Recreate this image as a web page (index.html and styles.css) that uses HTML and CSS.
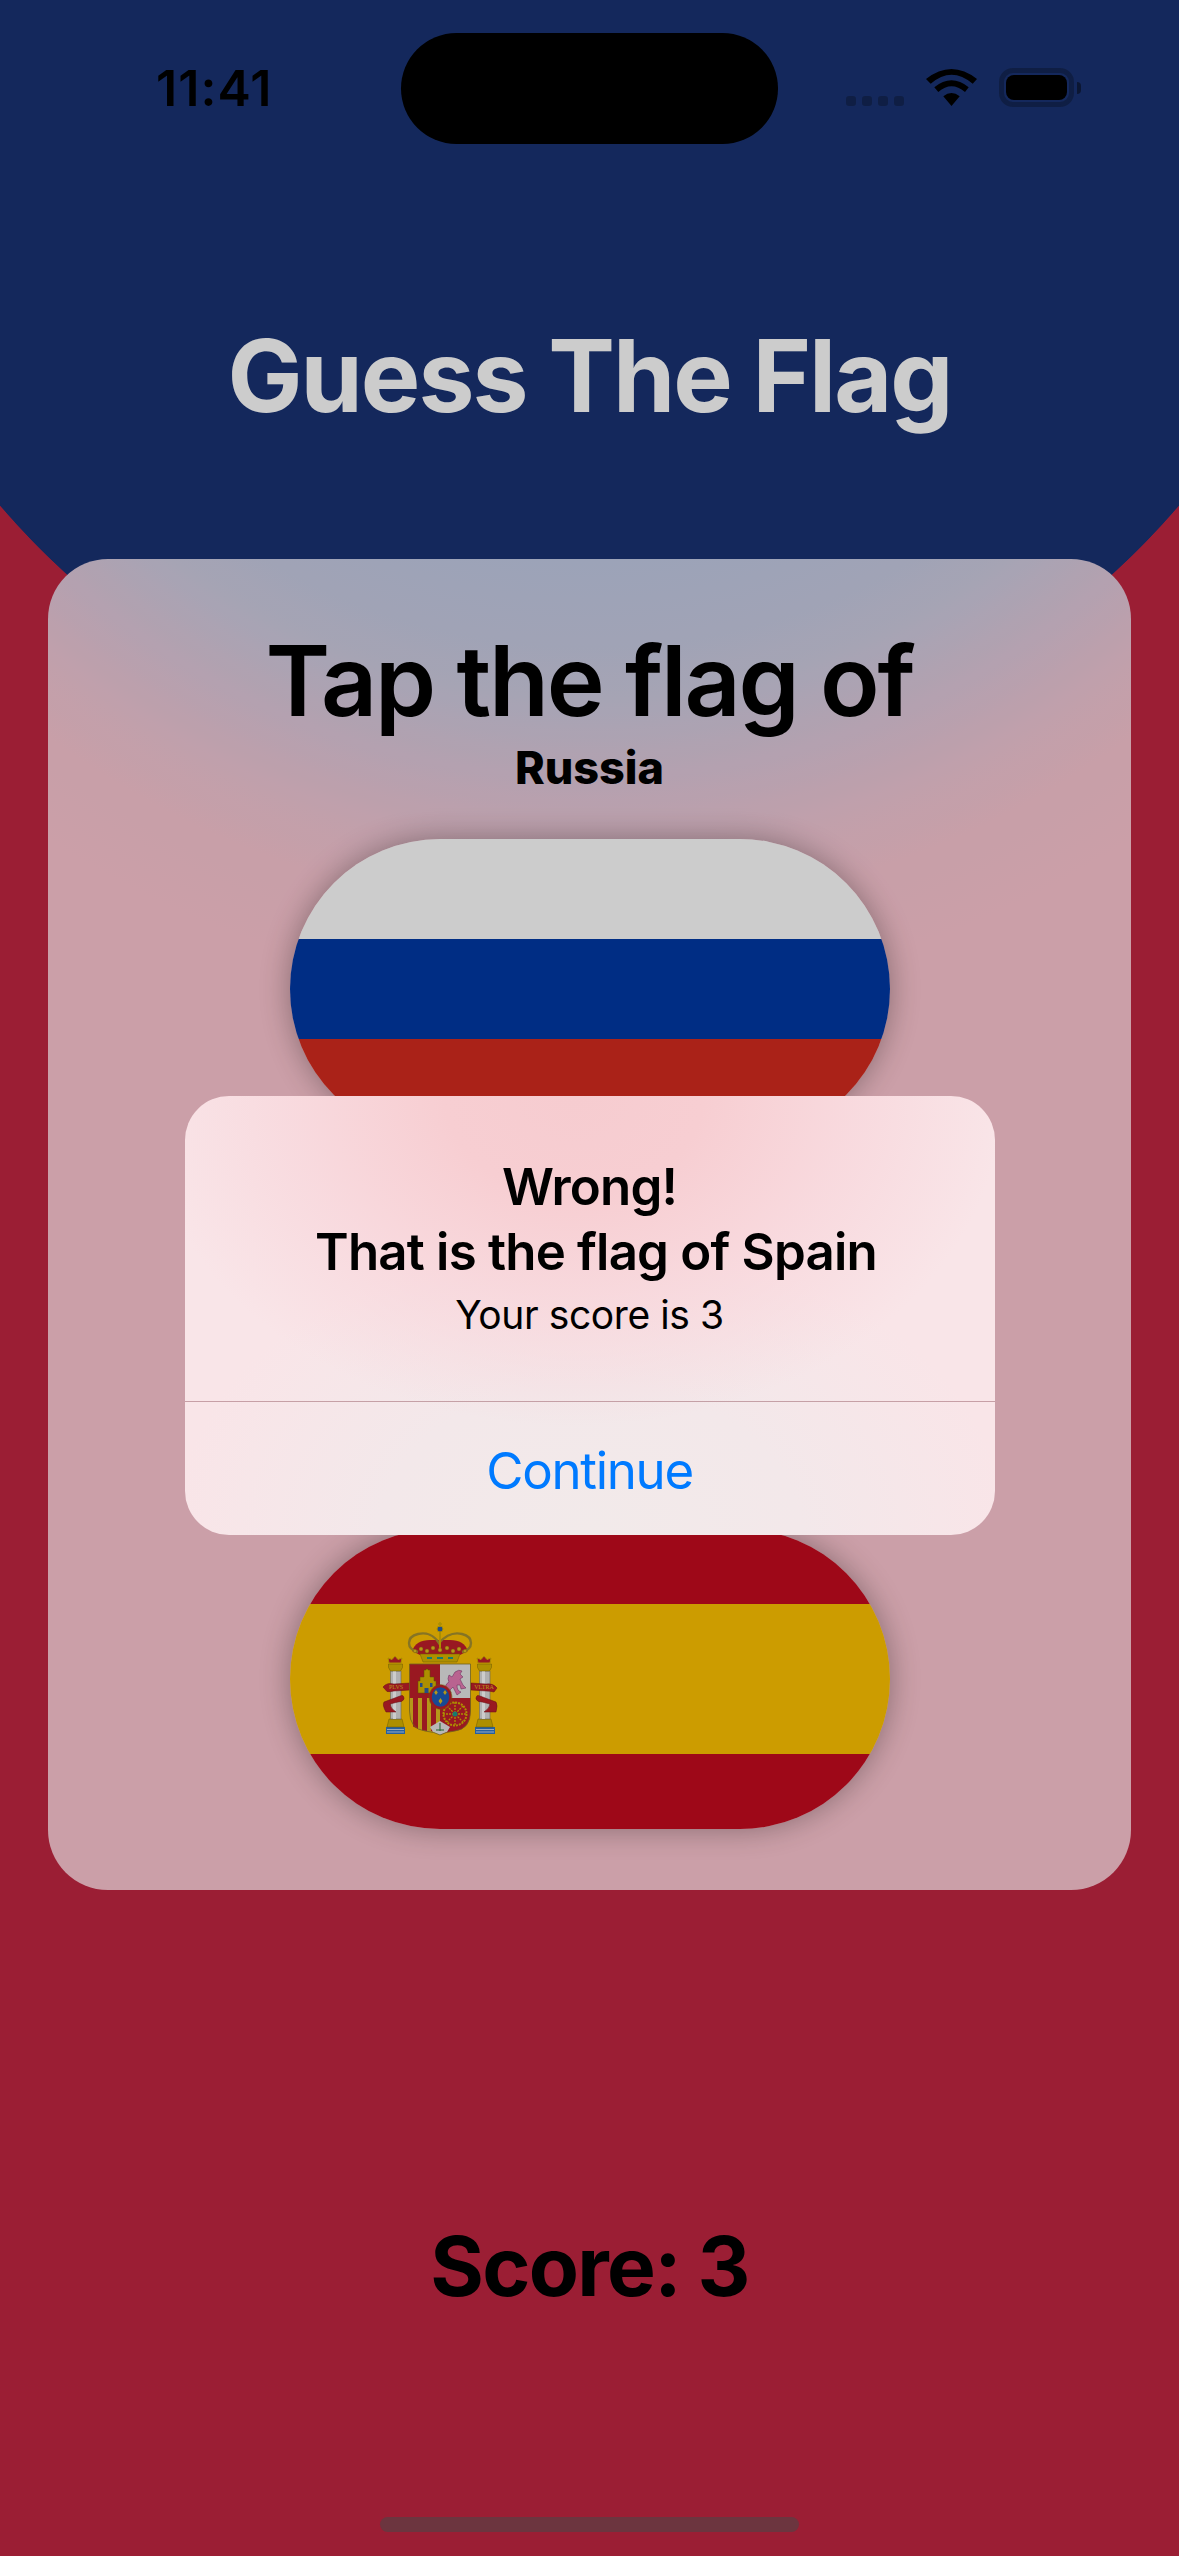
FILE: index.html
```html
<!DOCTYPE html>
<html lang="en">
<head>
<meta charset="utf-8">
<title>Guess The Flag</title>
<link rel="stylesheet" href="styles.css">
</head>
<body>
<main class="screen">
  <header class="status">
    <span class="time">11:41</span>
    <div class="island"></div>
    <div class="indicators">
      <div class="signal"><i></i><i></i><i></i><i></i></div>
      <svg class="wifi" viewBox="0 0 51 37"><path d="M0 10Q25.5-10 51 10L46.700 14.700Q25.500-3.300 4.700 14.700ZM8.300 18.300Q25.500 4.300 42.700 18.300L39 23Q25.500 11.600 12.300 23ZM17.300 27.300Q25.500 20.700 33.700 27.300L25.500 37Z"/></svg>
      <div class="battery"><div class="battery-fill"></div></div>
      <div class="battery-cap"></div>
    </div>
  </header>

  <h1 class="title">Guess The Flag</h1>

  <section class="card">
    <h2 class="prompt">Tap the flag of</h2>
    <p class="country">Russia</p>
    <div class="flags">
      <button class="flag flag-russia"><span></span><span></span><span></span></button>
      <div class="flag"></div>
      <button class="flag flag-spain">
        <span></span><span></span><span></span>
        <svg class="emblem" viewBox="0 0 150 150">
          <g>
            <path d="M26 128h19v7H26z" fill="#2f78c8"/>
            <path d="M27 130.500h17M27 133h17" stroke="#fff" stroke-width=".7"/>
            <path d="M29 120h13l2 8H27z" fill="#d9b300" stroke="#8a7000" stroke-width=".5"/>
            <path d="M30.500 72h10.500v48H30.500z" fill="#dcdcdc" stroke="#7d7d7d" stroke-width=".6"/>
            <path d="M33 72h3v48h-3z" fill="#fff"/>
            <path d="M28.500 65h14v3.500l-2 3.500H30.500l-2-3.500z" fill="#d9b300" stroke="#8a7000" stroke-width=".5"/>
            <path d="M29 64l-1-5 4 1.500 3-3.500 3 3.500 4-1.500-1 5z" fill="#c01f2a" stroke="#d9b300" stroke-width="1"/>
          </g>
          <g>
            <path d="M115 128h20v7h-20z" fill="#2f78c8"/>
            <path d="M116 130.500h18M116 133h18" stroke="#fff" stroke-width=".7"/>
            <path d="M118 120h13l2 8h-17z" fill="#d9b300" stroke="#8a7000" stroke-width=".5"/>
            <path d="M119.500 72H130v48h-10.500z" fill="#dcdcdc" stroke="#7d7d7d" stroke-width=".6"/>
            <path d="M122 72h3v48h-3z" fill="#fff"/>
            <path d="M117.500 65h14v3.500l-2 3.500h-10l-2-3.500z" fill="#d9b300" stroke="#8a7000" stroke-width=".5"/>
            <path d="M118 64l-1-5 4 1.500 3-3.500 3 3.500 4-1.500-1 5z" fill="#c01f2a" stroke="#d9b300" stroke-width="1"/>
          </g>
          <path d="M23 88Q27 83 34 85L50 84V91L34 92Q30 93 27 92.500Z" fill="#c01f2a" stroke="#7d1018" stroke-width=".5"/>
          <path d="M111 84L126 85Q133 84 137 89L134 93Q130 92 126 92L111 91Z" fill="#c01f2a" stroke="#7d1018" stroke-width=".5"/>
          <path d="M26 113Q22 106 24 103L40 97Q44 95 44 100Q43 103 38 103L30 105Q30 109 36 113Z" fill="#c01f2a" stroke="#7d1018" stroke-width=".5"/>
          <path d="M136 113Q138 106 136 103L120 97Q116 95 116 100Q117 103 122 103L130 105Q130 109 124 113Z" fill="#c01f2a" stroke="#7d1018" stroke-width=".5"/>
          <text class="motto" x="36" y="90" text-anchor="middle">PLVS</text>
          <text class="motto" x="124" y="90" text-anchor="middle">VLTRA</text>
          <path d="M52 52Q56 41 70 41H90Q104 41 108 52L100 56H60Z" fill="#c01f2a"/>
          <path d="M58 53C46 50 46 38 58 35C66 33 74 36 79 44C86 36 94 33 102 35C114 38 114 50 102 53" fill="none" stroke="#a8922e" stroke-width="2.400"/>
          <path d="M80 33V52" stroke="#d9b300" stroke-width="2"/>
          <circle cx="80" cy="30" r="3" fill="#2e5fa8" stroke="#d9b300"/>
          <path d="M80 23v5M78 25h4" stroke="#d9b300" stroke-width="1.500"/>
          <g fill="#e3bd20" stroke="#8a7000" stroke-width=".4">
            <circle cx="55" cy="52" r="1.800"/><circle cx="61" cy="50" r="2"/><circle cx="67" cy="52" r="2"/><circle cx="73" cy="49" r="2"/><circle cx="80" cy="51" r="2"/><circle cx="87" cy="49" r="2"/><circle cx="93" cy="52" r="2"/><circle cx="99" cy="50" r="2"/><circle cx="105" cy="52" r="1.800"/>
          </g>
          <path d="M60 55H100L97 63H63Z" fill="#d9b300" stroke="#8a7000" stroke-width=".5"/>
          <path d="M67 59h5M77 59h6M88 59h5" stroke="#1e9a8a" stroke-width="2"/>
          <path d="M49.500 65H80V99H49.500Z" fill="#c01f2a"/>
          <path d="M80 65h30.500V99H80Z" fill="#e6e6e6"/>
          <path d="M49.500 99H80V136Q75 133 65 132Q49.500 130 49.500 112Z" fill="#e3bd20"/>
          <path d="M53 99h5v31l-5-2.500zM62 99h5v33l-5-.800zM71 99h5v34l-5-1z" fill="#c01f2a"/>
          <path d="M80 99h30.500V112Q110.500 130 95 132Q85 133 80 136Z" fill="#c01f2a"/>
          <path d="M70 128l10-6 10 6-3 5-7 3-7-3z" fill="#e6e6e6"/>
          <path d="M80 124v8M76 131h8" stroke="#2d7d3c" stroke-width="1"/>
          <path d="M49.500 65H110.500V112Q110.500 130 95 132Q85 133 80 136Q75 133 65 132Q49.500 130 49.500 112Z" fill="none" stroke="#8a7a24" stroke-width=".8"/>
          <path d="M58 94V82h2V78h4V71h2v-1h2v1h2v7h4v4h2V94Z" fill="#d9b300" stroke="#7a6200" stroke-width=".5"/>
          <path d="M60 84h2.500v4H60zM70 84h2.500v4H70zM64.500 89h4v5h-4z" fill="#2e5fa8"/>
          <path d="M85 89Q86 84 89 83Q87 80 89 76L92 78L95 73Q99 70 102 72L100 75L103 78L100 80L103 86L106 89L101 90L100 86L97 86Q97 92 101 93L97 96L93 88L90 91L91 94L87 94Z" fill="#e87cb4" stroke="#7a2f6a" stroke-width=".5"/>
          <circle cx="95" cy="115" r="11.500" fill="none" stroke="#d9b300" stroke-width="2" stroke-dasharray="2 1"/>
          <path d="M95 103V127M83 115H107M87 107L103 123M103 107L87 123" stroke="#d9b300" stroke-width="1.300" stroke-dasharray="2 1"/>
          <circle cx="95" cy="115" r="2.500" fill="#1e9a8a"/>
          <ellipse cx="80.500" cy="98" rx="10" ry="11" fill="#1f5cb8" stroke="#c01f2a" stroke-width="2.500"/>
          <ellipse cx="80.500" cy="98" rx="11.500" ry="12.500" fill="none" stroke="#8a7000" stroke-width=".5"/>
          <path d="M76 91l1.800 2.500L76 96l-1.800-2.500zM85 91l1.800 2.500L85 96l-1.800-2.500zM80.500 99l2 3-2 3-2-3z" fill="#e3bd20"/>
        </svg>
      </button>
    </div>
  </section>

  <p class="score">Score: 3</p>

  <div class="scrim">
    <div class="alert">
      <div class="alert-body">
        <h3 class="alert-title">Wrong!<span class="alert-line">That is the flag of Spain</span></h3>
        <p class="alert-message">Your score is 3</p>
      </div>
      <button class="alert-action">Continue</button>
    </div>
    <div class="home"></div>
  </div>
</main>
</body>
</html>
```

FILE: styles.css
```css
* { box-sizing: border-box; }

html, body {
  margin: 0;
  padding: 0;
  width: 1179px;
  height: 2556px;
  overflow: hidden;
}

body {
  font-family: "Inter", "Noto Sans", sans-serif;
  color: #000;
}

.screen {
  position: relative;
  width: 1179px;
  height: 2556px;
  display: flex;
  flex-direction: column;
  align-items: center;
  background: radial-gradient(circle 777px at 589.5px 0, #1a3373 99.9%, #c22642 100%);
}

.status {
  width: 100%;
  height: 144px;
  padding-top: 33px;
  display: grid;
  grid-template-columns: 401px 377px 1fr;
  flex: none;
}

.time {
  align-self: start;
  margin: 25px 0 0 156px;
  font-size: 50px;
  line-height: 60px;
  font-weight: 600;
  letter-spacing: 1.1px;
}

.island {
  height: 111px;
  border-radius: 56px;
  background: #000;
}

.indicators {
  display: flex;
  align-items: flex-start;
  padding-left: 68px;
  height: 80px;
}

.signal {
  display: flex;
  gap: 6px;
  margin-top: 63px;
}

.signal i {
  width: 10px;
  height: 10px;
  border-radius: 3px;
  background: rgba(0, 0, 0, .25);
}

.wifi {
  width: 51px;
  height: 37px;
  margin: 36px 0 0 22px;
  fill: #000;
}

.battery {
  width: 75px;
  height: 39px;
  margin: 35px 0 0 22px;
  padding: 5px;
  border: 2px solid rgba(0, 0, 0, .25);
  border-radius: 14px;
  box-shadow: inset 0 0 0 3px rgba(0, 0, 0, .25);
}

.battery-fill {
  width: 100%;
  height: 100%;
  border-radius: 8px;
  background: #000;
}

.battery-cap {
  width: 4px;
  height: 12px;
  margin: 49px 0 0 3px;
  border-radius: 0 6px 6px 0;
  background: rgba(0, 0, 0, .45);
}

.title {
  margin: 170px 0 0;
  height: 245px;
  font-size: 100px;
  line-height: 124px;
  font-weight: 700;
  color: #fff;
  letter-spacing: -2px;
}

.card {
  width: 1083px;
  height: 1331px;
  flex: none;
  padding-top: 60px;
  border-radius: 60px;
  display: flex;
  flex-direction: column;
  align-items: center;
  background: radial-gradient(circle at 541.5px -559px,
    #c4cce6 560px,
    #c8cce4 640px,
    #d0cde2 700px,
    #e1cadc 777px,
    #f2c8d6 855px,
    #fac7d3 915px,
    #fec7d2 1000px);
}

.prompt {
  margin: 0;
  font-size: 98px;
  line-height: 124px;
  font-weight: 600;
  letter-spacing: -2.2px;
}

.country {
  margin: -2px 0 0;
  font-size: 45px;
  line-height: 54px;
  font-weight: 800;
}

.flags {
  margin-top: 44px;
  display: flex;
  flex-direction: column;
  gap: 45px;
}

.flag {
  position: relative;
  display: flex;
  flex-direction: column;
  width: 600px;
  height: 300px;
  padding: 0;
  border: 0;
  border-radius: 150px;
  background: none;
}

.flag span { display: block; width: 100%; }

.flag-russia, .flag-spain {
  overflow: hidden;
  box-shadow: 0 0 30px rgba(0, 0, 0, .33);
}

.flag-russia span { height: 100px; }
.flag-russia span:nth-child(1) { background: #fff; }
.flag-russia span:nth-child(2) { background: #0039a6; }
.flag-russia span:nth-child(3) { background: #d52b1e; }

.flag-spain span:nth-child(1), .flag-spain span:nth-child(3) { height: 75px; background: #c60b1e; }
.flag-spain span:nth-child(2) { height: 150px; background: #ffc400; }

.emblem {
  position: absolute;
  left: 70px;
  top: 70px;
  width: 150px;
  height: 150px;
}

.motto {
  font-family: "Liberation Serif", serif;
  font-size: 6px;
  fill: #e3bd20;
}

.score {
  margin: 326px 0 0;
  font-size: 82px;
  line-height: 102px;
  font-weight: 700;
  letter-spacing: -1.7px;
}

.scrim {
  position: absolute;
  inset: 0;
  padding-top: 1096px;
  display: flex;
  flex-direction: column;
  align-items: center;
  background: rgba(0, 0, 0, .2);
}

.alert {
  width: 810px;
  height: 439px;
  border-radius: 44px;
  overflow: hidden;
  background:
    radial-gradient(ellipse 430px 330px at 48% 0, #f6ccd0 0%, #f7ced2 30%, rgba(248, 214, 219, .75) 65%, rgba(249, 228, 232, 0) 100%),
    radial-gradient(ellipse 420px 300px at 50% 100%, #f2eaea 0%, #f3e8ea 50%, rgba(249, 230, 233, 0) 100%),
    #f9e5e8;
  display: flex;
  flex-direction: column;
}

.alert-body {
  height: 306px;
  padding-top: 58px;
  text-align: center;
  border-bottom: 1px solid rgba(150, 90, 100, .5);
}

.alert-title {
  margin: 0;
  font-size: 51px;
  line-height: 65px;
  font-weight: 600;
  letter-spacing: -.8px;
}

.alert-line {
  display: block;
  padding-left: 13px;
}

.alert-message {
  margin: 7px 0 0;
  font-size: 39px;
  line-height: 47px;
  font-weight: 400;
  letter-spacing: -.4px;
}

.alert-action {
  flex: 1;
  border: 0;
  padding: 3px 0 0;
  background: none;
  font-family: inherit;
  font-size: 51px;
  font-weight: 400;
  letter-spacing: -1.3px;
  color: #007aff;
}

.home {
  width: 419px;
  height: 15px;
  margin-top: 982px;
  border-radius: 8px;
  background: rgba(77, 68, 72, .6);
}
```
